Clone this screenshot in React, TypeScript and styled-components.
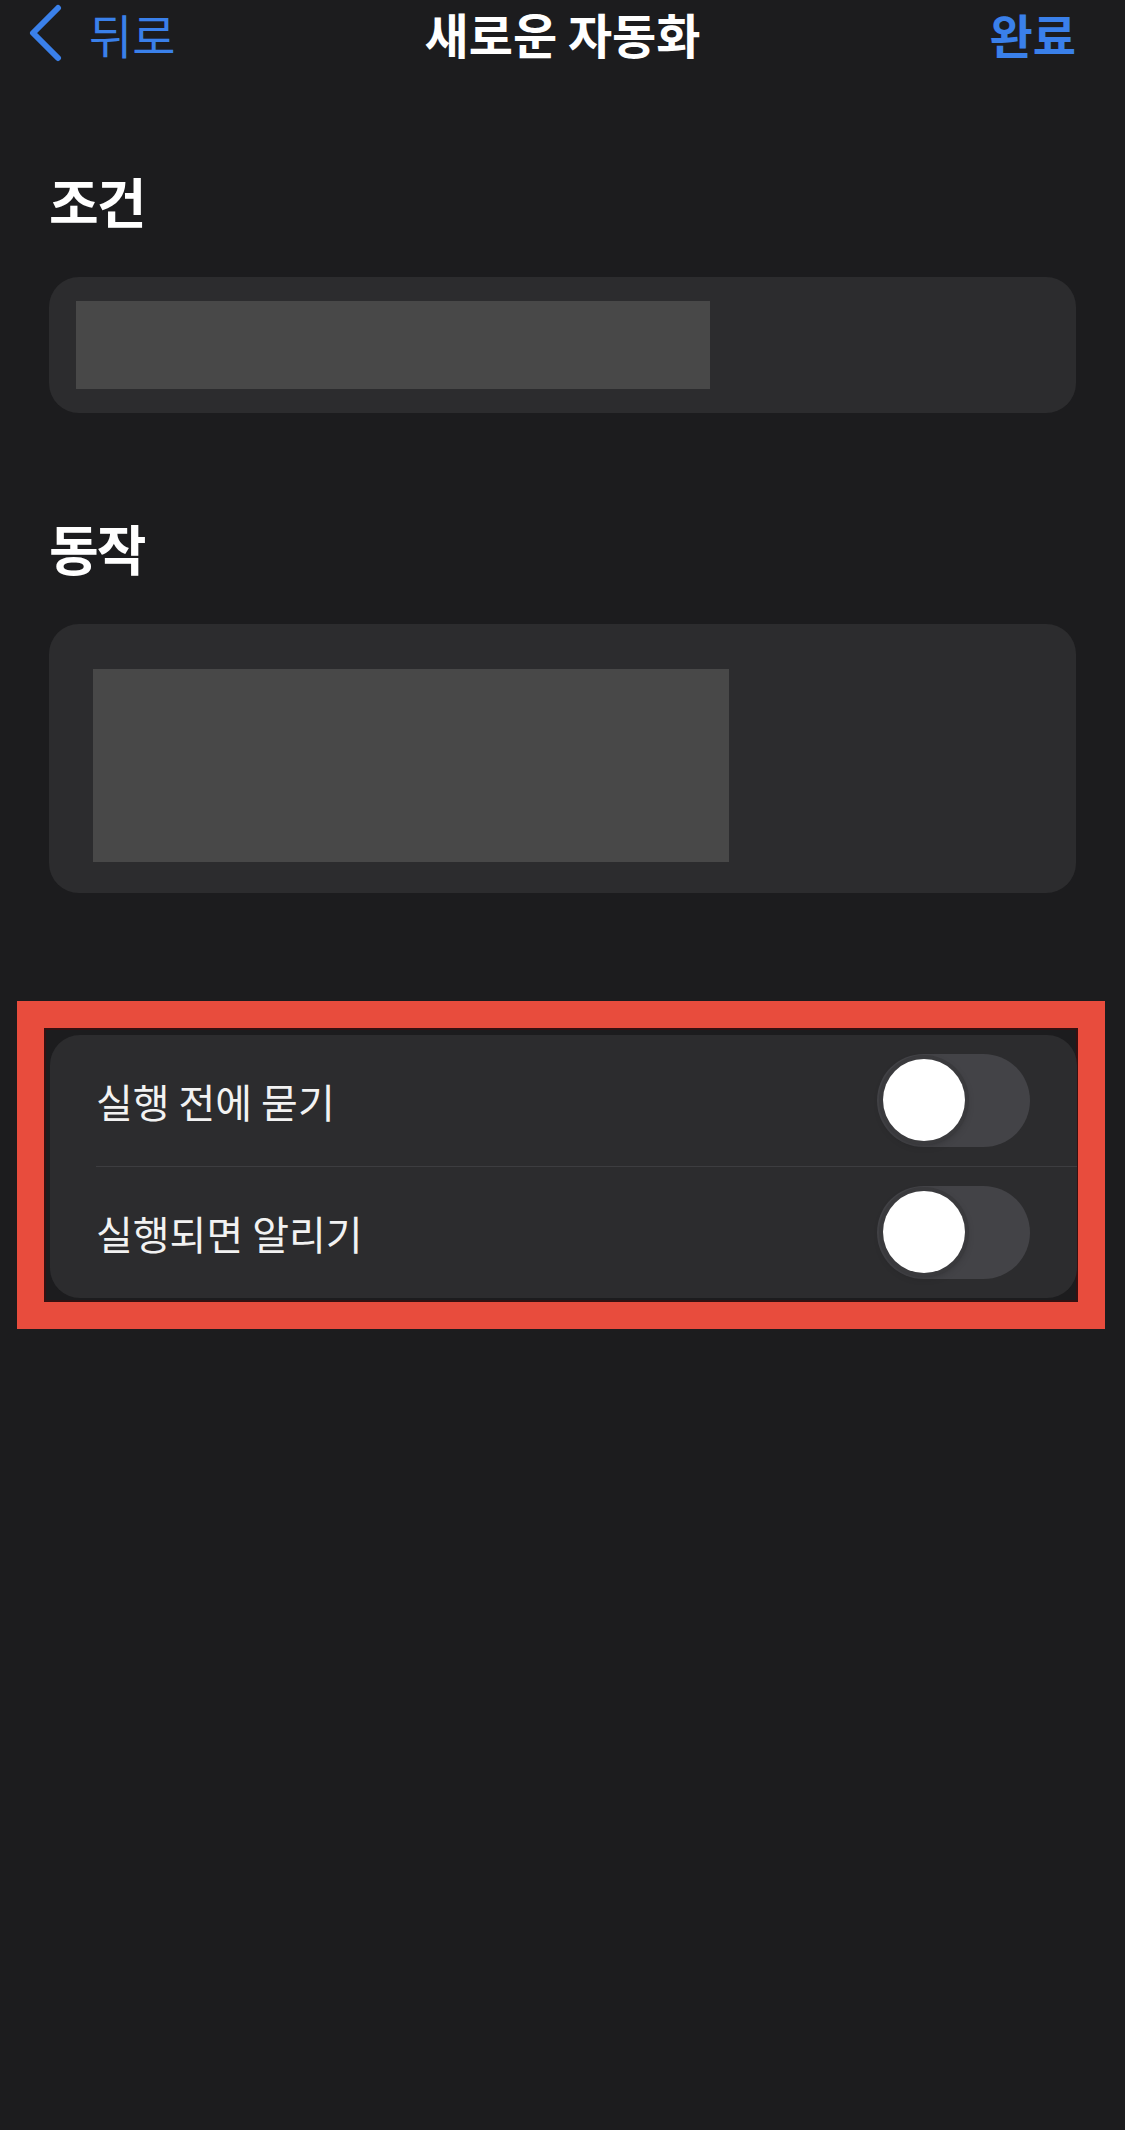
import React from "react";
import styled, { createGlobalStyle } from "styled-components";

const GlobalStyle = createGlobalStyle`
  html, body {
    margin: 0;
    padding: 0;
    background: #1c1c1e;
  }
  body {
    font-family: "Noto Sans CJK KR", "Noto Sans", sans-serif;
    color: #ffffff;
  }
`;

const Screen = styled.div`
  width: 1125px;
  min-height: 2130px;
  background: #1c1c1e;
`;

const NavBar = styled.header`
  display: grid;
  grid-template-columns: 1fr auto 1fr;
  align-items: center;
  height: 66px;
  padding: 0 49px;
`;

const BackButton = styled.button`
  display: flex;
  align-items: center;
  gap: 26px;
  justify-self: start;
  margin-left: -22px;
  padding: 0;
  border: none;
  background: none;
  color: #3a80ea;
  font-family: inherit;
  font-size: 47px;
  line-height: 1;
  cursor: pointer;
`;

const NavTitle = styled.h1`
  margin: 0;
  font-size: 48px;
  font-weight: 600;
  line-height: 1;
  color: #ffffff;
`;

const DoneButton = styled.button`
  justify-self: end;
  padding: 0;
  border: none;
  background: none;
  color: #3a80ea;
  font-family: inherit;
  font-size: 47px;
  font-weight: 700;
  line-height: 1;
  cursor: pointer;
`;

const Content = styled.main`
  display: flex;
  flex-direction: column;
  padding: 0 49px;
`;

const SectionTitle = styled.h2<{ $top: number }>`
  margin: ${(p) => p.$top}px 0 46px;
  font-size: 54px;
  font-weight: 700;
  letter-spacing: -2px;
  line-height: 60px;
  height: 60px;
  color: #ffffff;
`;

const Card = styled.section<{ $pad?: string }>`
  background: #2c2c2e;
  border-radius: 30px;
  padding: ${(p) => p.$pad || "0"};
`;

const Placeholder = styled.div<{ $w: number; $h: number }>`
  width: ${(p) => p.$w}px;
  height: ${(p) => p.$h}px;
  background: #484848;
`;

const Highlight = styled.div`
  margin: 108px -29px 0 -32px;
  border: 27px solid #e84c3d;
  padding: 7px 1px 4px 6px;
  background: #1c1c1e;
  box-shadow: inset 0 0 0 2px rgba(70, 10, 10, 0.6);
`;

const Row = styled.div<{ $divider?: boolean }>`
  display: flex;
  align-items: center;
  justify-content: space-between;
  height: 131px;
  margin-left: 46px;
  padding-right: 47px;
  border-bottom: ${(p) => (p.$divider ? "1px solid #3d3d40" : "none")};
`;

const RowLabel = styled.span`
  font-size: 40px;
  color: #f2f2f2;
`;

const Track = styled.div`
  position: relative;
  width: 153px;
  height: 93px;
  border-radius: 47px;
  background: #434347;
`;

const Knob = styled.div`
  position: absolute;
  left: 6px;
  top: 5px;
  width: 82px;
  height: 82px;
  border-radius: 50%;
  background: #ffffff;
  box-shadow: 0 0 0 4px #3a3a3d, 0 3px 8px rgba(0, 0, 0, 0.35);
`;

const Toggle: React.FC = () => (
  <Track>
    <Knob />
  </Track>
);

const settings = ["실행 전에 묻기", "실행되면 알리기"];

const App: React.FC = () => {
  return (
    <Screen>
      <GlobalStyle />
      <NavBar>
        <BackButton>
          <svg width="36" height="58" viewBox="0 0 36 58">
            <path
              d="M31 4 L6 29 L31 54"
              fill="none"
              stroke="#3a80ea"
              strokeWidth="6"
              strokeLinecap="round"
              strokeLinejoin="round"
            />
          </svg>
          뒤로
        </BackButton>
        <NavTitle>새로운 자동화</NavTitle>
        <DoneButton>완료</DoneButton>
      </NavBar>

      <Content>
        <SectionTitle $top={105}>조건</SectionTitle>
        <Card $pad="24px 27px">
          <Placeholder $w={634} $h={88} />
        </Card>

        <SectionTitle $top={105}>동작</SectionTitle>
        <Card $pad="45px 0 31px 44px">
          <Placeholder $w={636} $h={193} />
        </Card>

        <Highlight>
          <Card>
            {settings.map((label, i) => (
              <Row key={label} $divider={i < settings.length - 1}>
                <RowLabel>{label}</RowLabel>
                <Toggle />
              </Row>
            ))}
          </Card>
        </Highlight>
      </Content>
    </Screen>
  );
};

export default App;
